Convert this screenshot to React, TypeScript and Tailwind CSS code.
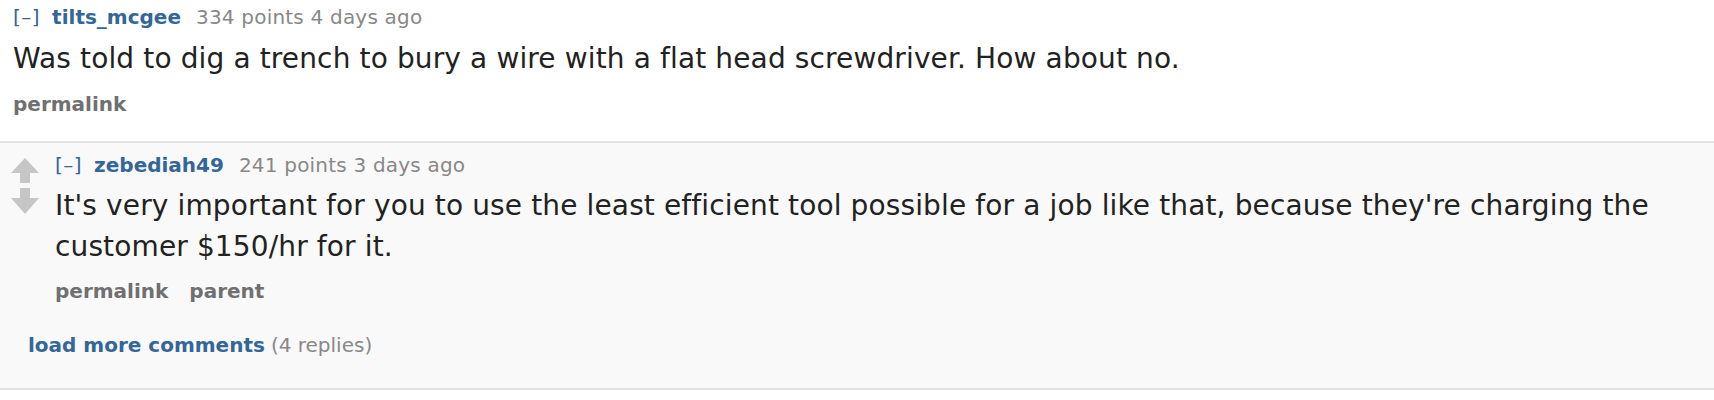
import React from 'react';

const font = { fontFamily: '"DejaVu Sans", Verdana, sans-serif' };

const Tagline = ({ author, points, age }: { author: string; points: number; age: string }) => (
  <div className="flex items-baseline text-[20px] leading-[24px] whitespace-nowrap">
    <span className="text-[#369] tracking-[0.5px]">[–]</span>
    <span className="ml-[12px] font-bold text-[#369]">{author}</span>
    <span className="ml-[15px] text-[#888] tracking-[0.2px]">{points} points {age}</span>
  </div>
);

const Votes = () => (
  <svg width="28" height="56" viewBox="0 0 28 56" className="shrink-0">
    <polygon points="14,0 28,15 19,15 19,25 9,25 9,15 0,15" fill="#c6c6c6" />
    <polygon points="9,30 19,30 19,40 28,40 14,56 0,40 9,40" fill="#c6c6c6" />
  </svg>
);

export default function App() {
  return (
    <div className="w-[1714px] h-[400px] bg-white text-[#222]" style={font}>
      {/* top comment */}
      <div className="pl-[13px] pt-[5px] pb-[25px]">
        <Tagline author="tilts_mcgee" points={334} age="4 days ago" />
        <p className="mt-[9px] text-[28px] leading-[41px] tracking-[0.13px]">
          Was told to dig a trench to bury a wire with a flat head screwdriver. How about no.
        </p>
        <div className="mt-[13px] flex gap-[21px] text-[20px] leading-[24px] font-bold text-[#707070]">
          <a>permalink</a>
        </div>
      </div>

      {/* child reply */}
      <div className="border-t-2 border-b-2 border-[#e2e2e2] bg-[#f9f9f9] pb-[31px]">
        <div className="flex pl-[11px] pt-[10px]">
          <div className="pt-[5px]">
            <Votes />
          </div>
          <div className="ml-[16px] pr-[40px]">
            <Tagline author="zebediah49" points={241} age="3 days ago" />
            <p className="mt-[8px] text-[28px] leading-[41px] tracking-[0.13px]">
              It's very important for you to use the least efficient tool possible for a job like that, because they're charging the customer $150/hr for it.
            </p>
            <div className="mt-[12px] flex gap-[21px] text-[20px] leading-[24px] font-bold text-[#707070]">
              <a>permalink</a>
              <a>parent</a>
            </div>
          </div>
        </div>
        <div className="mt-[30px] pl-[28px] text-[20px] leading-[24px] whitespace-nowrap">
          <a className="font-bold text-[#369]">load more comments</a>
          <span className="ml-[6px] text-[#888]">(4 replies)</span>
        </div>
      </div>
    </div>
  );
}
